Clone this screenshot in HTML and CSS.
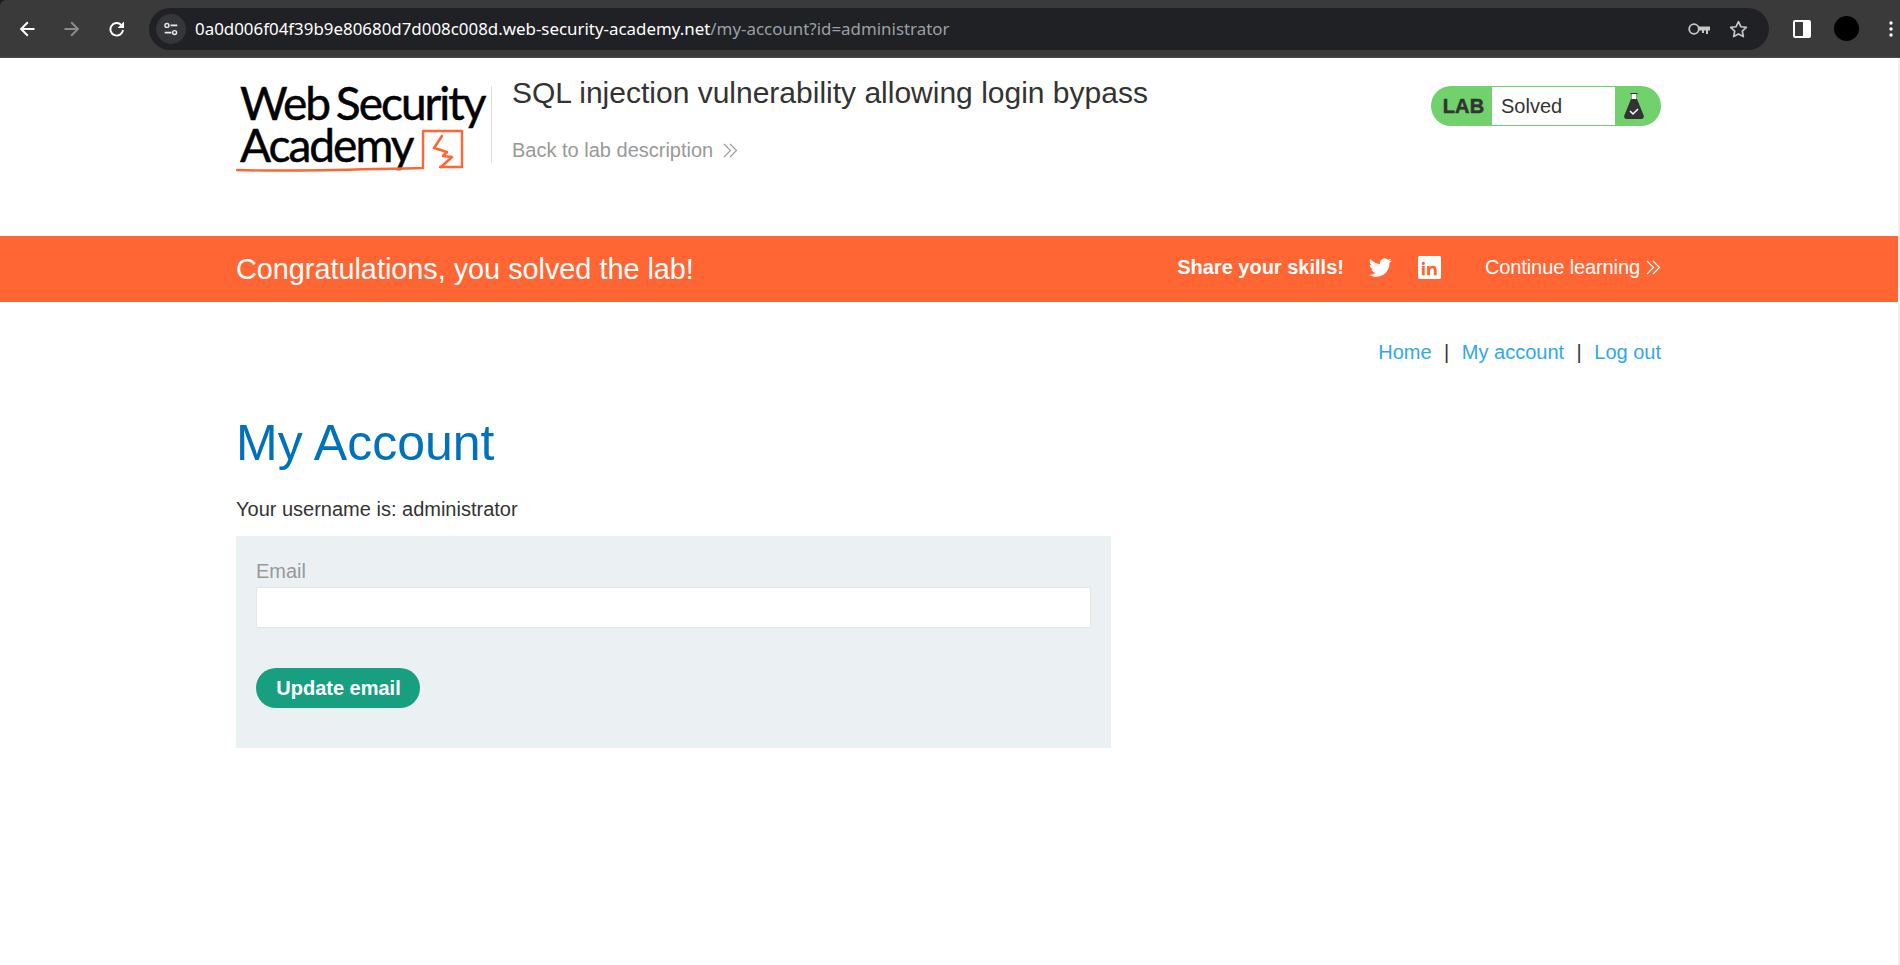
FILE: index.html
```html
<!DOCTYPE html>
<html lang="en">
<head>
<meta charset="utf-8">
<title>SQL injection vulnerability allowing login bypass</title>
<link rel="stylesheet" href="styles.css">
</head>
<body>
<div class="browser">
  <svg class="nav-icon" viewBox="0 0 16 16"><path d="M15.500 8H2.500M8.800 1.300 2.100 8l6.700 6.700" fill="none" stroke="#fff" stroke-width="2"/></svg>
  <svg class="nav-icon" viewBox="0 0 16 16"><path d="M.5 8h13M7.200 1.300 13.900 8l-6.700 6.700" fill="none" stroke="#8a8b8c" stroke-width="2"/></svg>
  <svg class="nav-icon reload" viewBox="0 0 16 16"><path d="M14 9a6.300 6.300 0 1 1-1.800-5.200L14 5.600" fill="none" stroke="#fff" stroke-width="1.900"/><path d="M15 .6v6.400H8.600z" fill="#fff"/></svg>
  <div class="omnibox">
    <span class="site-chip">
      <svg viewBox="0 0 20 20" class="tune"><circle cx="5.500" cy="6" r="2.200" fill="none" stroke="#e8eaed" stroke-width="1.600"/><path d="M9.500 6H17M3 14h7.500" stroke="#e8eaed" stroke-width="1.800"/><circle cx="14" cy="14" r="2.200" fill="none" stroke="#e8eaed" stroke-width="1.600"/></svg>
    </span>
    <span class="url"><span class="url-host">0a0d006f04f39b9e80680d7d008c008d.web-security-academy.net</span><span class="url-path">/my-account?id=administrator</span></span>
    <svg class="omni-icon key" viewBox="0 0 22 12"><circle cx="6" cy="6" r="4.800" fill="none" stroke="#c4c7c5" stroke-width="1.800"/><path d="M10.500 3.500H22v4h-2v3.500h-2V7.500h-2V10h-2V7.500h-3.500z" fill="#c4c7c5"/></svg>
    <svg class="omni-icon star" viewBox="0 0 20 19"><path d="M10 1.800l2.500 5.300 5.800.7-4.300 4 1.100 5.700L10 14.700l-5.100 2.800L6 11.800l-4.300-4 5.800-.7z" fill="none" stroke="#c4c7c5" stroke-width="1.800" stroke-linejoin="round"/></svg>
  </div>
  <svg class="side-panel" viewBox="0 0 18 18"><rect width="18" height="18" rx="2" fill="#fff"/><rect x="2" y="2" width="8" height="14" fill="#3a3a3a"/></svg>
  <span class="avatar"></span>
  <svg class="menu" viewBox="0 0 4 16"><circle cx="2" cy="2" r="1.700" fill="#fff"/><circle cx="2" cy="8" r="1.700" fill="#fff"/><circle cx="2" cy="14" r="1.700" fill="#fff"/></svg>
</div>

<div class="page">
<header class="lab-header">
  <div class="logo">
    <div class="logo-line">Web Security</div>
    <div class="logo-line">Academy</div>
    <svg class="logo-mark" viewBox="0 0 260 100"><path d="M1 88c60 2 130-1 186-2V49h39v36h-22" fill="none" stroke="#ff6633" stroke-width="2.400" stroke-linecap="round" stroke-linejoin="round"/><path d="M206 54l-8 12 13 4-4 4 9 1-11 10" fill="none" stroke="#ff6633" stroke-width="2.600" stroke-linejoin="round" stroke-linecap="round"/></svg>
  </div>
  <div class="lab-title-block">
    <h2 class="lab-title">SQL injection vulnerability allowing login bypass</h2>
    <a class="back-link">Back to lab description
      <svg class="chevrons" viewBox="0 0 15 15"><path d="M1 1l6.500 6.500L1 14M7 1l6.500 6.500L7 14" fill="none" stroke="#999" stroke-width="1.100"/></svg>
    </a>
  </div>
  <div class="lab-status">
    <span class="lab-tag">LAB</span>
    <span class="lab-state">Solved</span>
    <span class="lab-flask">
      <svg viewBox="0 0 20 26" class="flask"><path d="M6.500 0h7v1.500h-.5V6l6.700 16.500c.6 1.800-.5 3.500-2.200 3.500H2.500C.8 26-.3 24.300.3 22.500L7 6V1.500h-.5z" fill="#333"/><rect x="7.500" y="1" width="5" height="5" fill="#fff"/><path d="M6 18l3 3 5-5" fill="none" stroke="#fff" stroke-width="1.500"/></svg>
    </span>
  </div>
</header>

<section class="banner">
  <div class="banner-inner">
    <h4 class="banner-title">Congratulations, you solved the lab!</h4>
    <div class="banner-right">
      <span class="share">Share your skills!</span>
      <svg class="social twitter" viewBox="0 0 24 24"><path d="M23.600 4.600c-.9.400-1.800.7-2.800.8 1-.6 1.800-1.600 2.100-2.700-.9.600-2 1-3.100 1.200a4.900 4.900 0 0 0-8.300 4.400C7.500 8.100 3.900 6.200 1.500 3.200a4.900 4.900 0 0 0 1.500 6.500c-.8 0-1.500-.2-2.200-.6 0 2.400 1.700 4.400 3.900 4.900-.7.200-1.500.2-2.200.1.600 2 2.400 3.400 4.600 3.400a9.900 9.900 0 0 1-7.200 2c2.200 1.400 4.800 2.200 7.500 2.200 9.100 0 14.300-7.700 14-14.600 1-.7 1.800-1.500 2.400-2.500z" fill="#fff"/></svg>
      <svg class="social linkedin" viewBox="0 0 24 24"><path d="M1.500 0h21c.8 0 1.500.7 1.500 1.500v21c0 .8-.7 1.500-1.500 1.500h-21C.7 24 0 23.300 0 22.500v-21C0 .7.700 0 1.500 0z" fill="#fff"/><path d="M4 10.500h3V20H4zM5.500 6a1.700 1.700 0 1 1 0 3.400 1.700 1.700 0 0 1 0-3.400zM9.500 10.500h2.900v1.300c.5-.8 1.500-1.600 3-1.600 3.100 0 4.100 2 4.100 4.700V20h-3v-4.500c0-1.100-.1-2.700-1.600-2.700s-2.400 1.200-2.400 2.500V20h-3z" fill="#ff6633"/></svg>
      <a class="continue">Continue learning
        <svg class="chevrons" viewBox="0 0 15 15"><path d="M1 1l6.500 6.500L1 14M7 1l6.500 6.500L7 14" fill="none" stroke="#fff" stroke-width="1.100"/></svg>
      </a>
    </div>
  </div>
</section>

<main class="content">
  <nav class="top-links">
    <a>Home</a><span class="sep">|</span><a>My account</a><span class="sep">|</span><a>Log out</a>
  </nav>
  <h1 class="page-title">My Account</h1>
  <p class="username">Your username is: administrator</p>
  <form class="email-form">
    <label class="email-label">Email</label>
    <input class="email-input" type="email">
    <button class="update-btn" type="button">Update email</button>
  </form>
</main>
</div>
</body>
</html>
```
FILE: styles.css
```css
* { box-sizing: border-box; }
html, body { margin: 0; padding: 0; }
body {
  font-family: "Liberation Sans", Arial, sans-serif;
  color: #333332;
  background: #1c1c1c;
  height: 965px;
  overflow: hidden;
}

/* browser chrome */
.browser {
  height: 58px;
  background: #3a3a3a;
  border-top-left-radius: 6px;
  border-bottom: 1px solid #4a4a4a;
  display: flex;
  align-items: center;
  padding-left: 18.500px;
}
.nav-icon { width: 16px; height: 16px; margin-right: 29px; flex: none; }
.nav-icon.reload { margin-right: 24.500px; }
.omnibox {
  width: 1620px;
  height: 42px;
  flex: none;
  background: #202124;
  border-radius: 21px;
  display: flex;
  align-items: center;
  padding-left: 7px;
  padding-right: 21px;
}
.site-chip {
  width: 30px; height: 30px;
  border-radius: 50%;
  background: #35363a;
  display: flex; align-items: center; justify-content: center;
  margin-right: 9px;
  flex: none;
}
.tune { width: 18px; height: 18px; }
.url { flex: 1; font-family: "Noto Sans", sans-serif; font-size: 16.900px; white-space: nowrap; }
.url-host { color: #fff; }
.url-path { color: #9aa0a6; }
.omni-icon { flex: none; }
.key { width: 22px; height: 12px; margin-right: 19px; }
.star { width: 19px; height: 18px; }
.side-panel { width: 18px; height: 18px; margin-left: 24px; flex: none; }
.avatar { width: 25px; height: 25px; border-radius: 50%; background: #000; margin-left: 23px; flex: none; }
.menu { width: 4px; height: 16px; margin-left: 30px; flex: none; }

/* page, with the thin strip of the overlay scrollbar on the right */
.page {
  height: 907px;
  background: #fff;
  border-right: 2px solid #f0f0f0;
}

/* lab header */
.lab-header {
  height: 178px;
  padding: 0 237px 0 236px;
  display: flex;
  align-items: flex-start;
}
.logo {
  position: relative;
  width: 260px;
  height: 100px;
  margin-top: 24px;
  font-family: "Lato", sans-serif;
  font-size: 46px;
  line-height: 42px;
  letter-spacing: -2px;
  word-spacing: -3px;
  -webkit-text-stroke: .5px #000;
  color: #000;
  flex: none;
}
.logo-line { white-space: nowrap; padding-left: 4px; }
.logo-mark { position: absolute; left: 0; top: 0; width: 260px; height: 100px; }
.lab-title-block {
  margin-left: -5px;
  margin-top: 28px;
  border-left: 1px solid #e0e0e0;
  margin-right: auto;
  padding-left: 20px;
  height: 77px;
}
.lab-title { margin: -12px 0 0; font-size: 30px; font-weight: 400; line-height: 38px; white-space: nowrap; }
.back-link { display: flex; align-items: center; gap: 10px; color: #999; font-size: 20px; margin-top: 27px; line-height: 23px; }
.chevrons { width: 15px; height: 15px; flex: none; }
.lab-status {
  margin-top: 28px;
  width: 230px;
  height: 40px;
  background: #70d16d;
  border-radius: 20px;
  display: flex;
  align-items: stretch;
  padding: 1px 0;
  flex: none;
}
.lab-tag { width: 61px; text-align: center; font-weight: 700; font-size: 20px; letter-spacing: .2px; line-height: 38px; padding-left: 4px; -webkit-text-stroke: .5px #333; }
.lab-state { width: 123px; background: #fff; font-size: 20px; line-height: 38px; padding-left: 9px; }
.lab-flask { flex: 1; display: flex; align-items: center; padding-left: 9px; }
.flask { width: 20px; height: 26px; }

/* banner */
.banner { height: 66px; background: #ff6633; color: #fff; }
.banner-inner {
  height: 100%;
  padding: 0 237px 0 236px;
  display: flex;
  align-items: center;
  justify-content: space-between;
}
.banner-title { margin: 0; font-size: 28.800px; font-weight: 400; }
.banner-right { display: flex; align-items: center; margin-top: -3px; }
.share { font-weight: 700; font-size: 20px; margin-right: 25px; }
.social { width: 23px; height: 23px; flex: none; }
.twitter { margin-right: 26px; }
.linkedin { margin-right: 44px; }
.continue { display: flex; align-items: center; gap: 6px; font-size: 20px; letter-spacing: -.1px; }

/* content */
.content { padding: 0 237px 0 236px; }
.top-links { display: flex; justify-content: flex-end; font-size: 20px; margin-top: 39px; line-height: 23px; }
.top-links a { color: #30a8e6; }
.sep { margin: 0 12.500px; color: #333; }
.page-title { margin: 45px 0 0; font-size: 50px; line-height: 68px; font-weight: 400; color: #0071bc; }
.username { margin: 21px 0 0; font-size: 20px; line-height: 23px; }
.email-form {
  width: 875px;
  height: 212px;
  margin-top: 15px;
  background: #ebf0f2;
  padding: 24px 20px 0;
  display: flex;
  flex-direction: column;
  align-items: flex-start;
}
.email-label { color: #999; font-size: 20px; line-height: 23px; margin-bottom: 4px; }
.email-input { width: 100%; height: 41px; background: #fff; border: 1px solid #e6e6e6; border-radius: 2px; }
.update-btn {
  margin-top: 40px;
  width: 164px;
  height: 40px;
  padding: 0 0 0 1px;
  background: #189f80;
  border: 0;
  border-radius: 20px;
  color: #fff;
  font-family: "Liberation Sans", Arial, sans-serif;
  font-weight: 700;
  font-size: 20px;
}
```
